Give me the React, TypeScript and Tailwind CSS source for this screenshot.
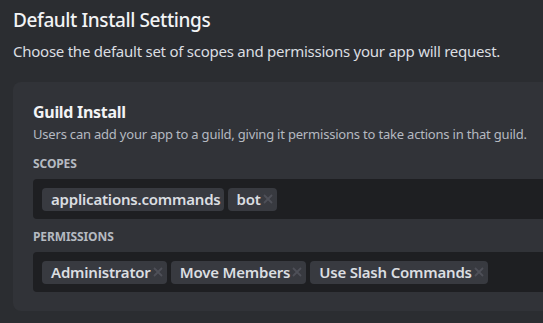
import React from "react";

const Chip = ({ label, removable = true }: { label: string; removable?: boolean }) => (
  <span className="flex h-[23px] items-center rounded-[4px] bg-[#383a40] pl-[9px] pr-[3px] text-[15px] font-semibold tracking-[-0.2px] text-[#dbdee1]">
    {label}
    {removable && (
      <svg viewBox="0 0 12 12" className="ml-[1px] h-[12px] w-[12px] text-[#4e5058]" fill="none" stroke="currentColor" strokeWidth="1.8">
        <path d="M2 2l8 8M10 2l-8 8" />
      </svg>
    )}
  </span>
);

const ChipField = ({ chips }: { chips: { label: string; removable?: boolean }[] }) => (
  <div className="flex h-[40px] items-center gap-[4px] rounded-l-[4px] bg-[#1e1f22] pl-[9px]">
    {chips.map((c) => (
      <Chip key={c.label} label={c.label} removable={c.removable} />
    ))}
  </div>
);

export default function App() {
  return (
    <div className="h-[323px] w-[543px] overflow-hidden bg-[#2b2d31] pl-[13px] pt-[7px] font-['Noto_Sans',sans-serif]">
      <h1 className="text-[19px] font-medium leading-[26px] tracking-[-0.4px] text-[#f2f3f5]">Default Install Settings</h1>
      <p className="mt-[8px] text-[15px] leading-[20px] tracking-[-0.25px] text-[#dbdee1]">
        Choose the default set of scopes and permissions your app will request.
      </p>
      <div className="mt-[21px] h-[229px] rounded-l-[8px] bg-[#313338] pl-[20px] pt-[20px]">
        <h2 className="text-[16px] font-bold leading-[20px] tracking-[-0.3px] text-[#f2f3f5]">Guild Install</h2>
        <p className="mt-[3px] whitespace-nowrap text-[13px] leading-[18px] tracking-[-0.2px] text-[#b5bac1]">
          Users can add your app to a guild, giving it permissions to take actions in that guild.
        </p>
        <div className="mt-[13px] text-[12px] font-bold uppercase leading-[16px] tracking-[-0.1px] text-[#b5bac1]">Scopes</div>
        <div className="mt-[7px]">
          <ChipField chips={[{ label: "applications.commands", removable: false }, { label: "bot" }]} />
        </div>
        <div className="mt-[10px] text-[12px] font-bold uppercase leading-[16px] tracking-[-0.1px] text-[#b5bac1]">Permissions</div>
        <div className="mt-[7px]">
          <ChipField chips={[{ label: "Administrator" }, { label: "Move Members" }, { label: "Use Slash Commands" }]} />
        </div>
      </div>
    </div>
  );
}
